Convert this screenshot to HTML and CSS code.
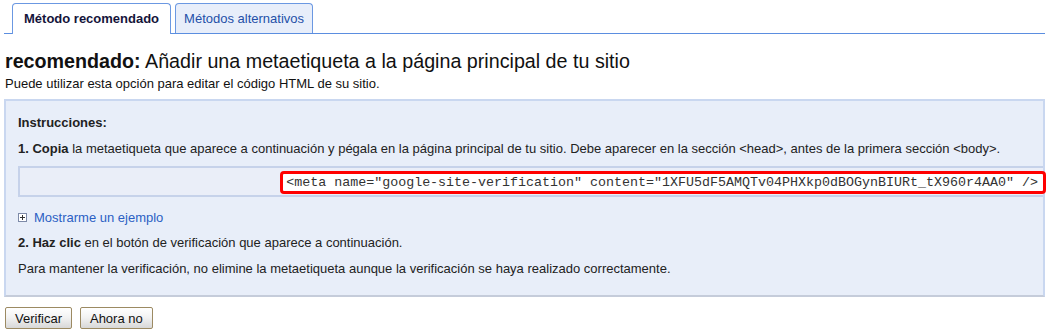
FILE: index.html
```html
<!DOCTYPE html>
<html lang="es">
<head>
  <meta charset="UTF-8" />
  <title>Verificar el sitio - Método recomendado</title>
  <link rel="stylesheet" href="styles.css">
</head>
<body>

<div class="page">
  <div class="tabs">
    <a class="tab active" href="#">Método recomendado</a>
    <a class="tab" href="#">Métodos alternativos</a>
  </div>

  <h1><strong>recomendado:</strong> Añadir una metaetiqueta a la página principal de tu sitio</h1>
  <p class="intro">Puede utilizar esta opción para editar el código HTML de su sitio.</p>

  <div class="instructions">
    <p class="title">Instrucciones:</p>
    <p><strong>1. Copia</strong> la metaetiqueta que aparece a continuación y pégala en la página principal de tu sitio. Debe aparecer en la sección &lt;head&gt;, antes de la primera sección &lt;body&gt;.</p>

    <div class="code-box">
      <code class="meta-tag">&lt;meta name="google-site-verification" content="1XFU5dF5AMQTv04PHXkp0dBOGynBIURt_tX960r4AA0" /&gt;</code>
    </div>

    <a class="example" href="#">
      <span class="plus">
        <svg width="9" height="9" viewBox="0 0 9 9">
          <rect x="0.5" y="0.5" width="8" height="8" fill="#fff" stroke="#7d8aa8" />
          <path d="M2 4.5h5M4.5 2v5" stroke="#333" stroke-width="1" />
        </svg>
      </span>
      Mostrarme un ejemplo
    </a>

    <p><strong>2. Haz clic</strong> en el botón de verificación que aparece a continuación.</p>
    <p>Para mantener la verificación, no elimine la metaetiqueta aunque la verificación se haya realizado correctamente.</p>
  </div>

  <div class="actions">
    <button>Verificar</button>
    <button>Ahora no</button>
  </div>
</div>

</body>
</html>
```

FILE: styles.css
```css
* { box-sizing: border-box; }

body {
  margin: 0;
  font-family: Arial, "Liberation Sans", sans-serif;
  font-size: 13px;
  line-height: 15px;
  color: #222;
  background: #fff;
}

.page {
  padding: 3px 8px 0 4px;
}

.tabs {
  display: flex;
  gap: 4px;
  padding-left: 8px;
  border-bottom: 1px solid #5b8ee0;
}

.tab {
  display: block;
  padding: 7px 8px 7px;
  border: 1px solid #6b98e2;
  border-bottom: none;
  border-radius: 4px 4px 0 0;
  font-size: 13px;
  line-height: 15px;
  text-decoration: none;
  color: #2450a8;
  background: #e8eefa;
}

.tab.active {
  font-weight: bold;
  color: #14143a;
  background: #fff;
  margin-bottom: -1px;
  padding: 7px 11px 8px;
}

h1 {
  margin: 15px 0 0 1px;
  font-size: 19.7px;
  line-height: 24px;
  font-weight: normal;
  color: #111;
}

.intro {
  margin: 3px 0 8px 1px;
  color: #111;
}

.instructions {
  background: #e8eef9;
  border: 2px solid #c9d7f0;
  border-bottom-color: #c5ccda;
  padding: 14px 0 19px 12px;
}

.instructions p {
  margin: 0 0 11px;
}

.instructions p:last-child {
  margin-bottom: 0;
}

.instructions .title {
  font-weight: bold;
}

.code-box {
  display: flex;
  justify-content: flex-end;
  height: 31px;
  margin: -1px 0 13px;
  padding-top: 3px;
  border: 2px solid #c6d2ea;
  border-right: none;
  background: #eaeef8;
}

.meta-tag {
  display: block;
  height: 23px;
  margin-right: -3px;
  padding: 1px 5px 0 3px;
  border: 3px solid #f00;
  border-radius: 4px;
  background: #fff;
  font-family: "Courier New", "Liberation Mono", monospace;
  font-size: 13.33px;
  line-height: 15px;
  color: #333;
  white-space: nowrap;
}

.example {
  display: flex;
  align-items: center;
  gap: 7px;
  margin-bottom: 10px;
  color: #2b5fc4;
  text-decoration: none;
}

.plus {
  display: flex;
}

.actions {
  display: flex;
  gap: 8px;
  padding: 10px 0 0 1px;
}

button {
  height: 22px;
  padding: 0 9px;
  border: 1px solid #9c8a62;
  border-radius: 2px;
  background: linear-gradient(#ffffff, #f3f3f3 45%, #d8d8d8);
  font-family: Arial, "Liberation Sans", sans-serif;
  font-size: 13px;
  color: #111;
  cursor: pointer;
}
```
